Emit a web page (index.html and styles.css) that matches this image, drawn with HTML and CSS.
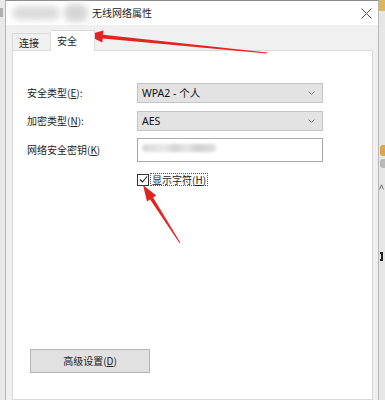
FILE: index.html
```html
<!DOCTYPE html>
<html lang="zh-CN">
<head>
<meta charset="utf-8">
<title>无线网络属性</title>
<link rel="stylesheet" href="styles.css">
</head>
<body>
<div class="screen">
  <div class="bg-left"><div class="bg-mark"></div></div>
  <div class="window">
    <div class="titlebar">
      <div class="blur-a"></div>
      <div class="blur-b"></div>
      <span class="title">无线网络属性</span>
      <svg class="close" width="11" height="11" viewBox="0 0 11 11"><path d="M0.5 0.5 L10.5 10.5 M10.5 0.5 L0.5 10.5" stroke="#505050" stroke-width="1" fill="none"/></svg>
    </div>
    <div class="body">
      <div class="tabs">
        <div class="tab">连接</div>
        <div class="tab active">安全</div>
      </div>
      <div class="panel">
        <div class="row">
          <span class="label">安全类型(<u>E</u>):</span>
          <div class="select"><span>WPA2 - 个人</span><svg width="7" height="4" viewBox="0 0 7 4"><path d="M0.5 0.5 L3.5 3.5 L6.5 0.5" stroke="#8a8a8a" fill="none"/></svg></div>
        </div>
        <div class="row">
          <span class="label">加密类型(<u>N</u>):</span>
          <div class="select"><span>AES</span><svg width="7" height="4" viewBox="0 0 7 4"><path d="M0.5 0.5 L3.5 3.5 L6.5 0.5" stroke="#8a8a8a" fill="none"/></svg></div>
        </div>
        <div class="row row-key">
          <span class="label">网络安全密钥(<u>K</u>)</span>
          <div class="input"><div class="blur-key"></div></div>
        </div>
        <div class="check-row">
          <span class="checkbox"><svg width="9" height="9" viewBox="0 0 9 9"><path d="M1 4.5 L3.5 7 L8 1.5" stroke="#222" stroke-width="1.1" fill="none"/></svg></span>
          <span class="check-label">显示字符(<u>H</u>)</span>
        </div>
        <div class="btn">高级设置(<u>D</u>)</div>
      </div>
    </div>
  </div>
  <div class="bg-right">
    <div class="r-yellow"></div>
    <div class="r-orange"></div>
    <div class="r-gray"></div>
    <svg class="r-caret" width="5" height="6" viewBox="0 0 5 6"><path d="M0.5 5.5 L2.5 0.8 L4.5 5.5" stroke="#777" fill="none"/></svg>
    <div class="r-bracket"></div>
  </div>
  <svg class="arrows" width="385" height="400" viewBox="0 0 385 400">
    <polygon fill="#e3231f" points="87,35 103.5,30.6 103.1,34.8 267,52.5 267,53.5 102.7,38.4 102.3,42.6"/>
    <polygon fill="#e3231f" points="143,185 156.2,195.5 153.1,197.5 180.4,242.7 179.6,243.3 150.1,199.5 147,201.5"/>
  </svg>
</div>
</body>
</html>
```

FILE: styles.css
```css
* { box-sizing: border-box; }
html, body { margin: 0; padding: 0; }
body {
  font-family: "Noto Sans", "Noto Sans CJK SC", sans-serif;
  color: #1a1a1a;
  background: #ececec;
}
.screen {
  position: relative;
  width: 385px;
  height: 400px;
  overflow: hidden;
  display: flex;
}
.bg-left {
  width: 5px;
  flex: none;
  background: #e9e9e9;
  overflow: hidden;
}
.bg-mark {
  margin-top: 8px;
  width: 3px;
  height: 9px;
  background: #8a8a8a;
  opacity: 0.6;
}
.window {
  width: 374px;
  flex: none;
  border-left: 1px solid #b8b8b8;
  border-right: 1px solid #b8b8b8;
  border-top: 1px solid #8c8c8c;
  background: #f0f0f0;
  display: flex;
  flex-direction: column;
}
.titlebar {
  height: 24px;
  background: #fff;
  display: flex;
  align-items: center;
  position: relative;
  flex: none;
}
.blur-a {
  position: absolute;
  left: 6px; top: 5px;
  width: 48px; height: 14px;
  background: #dcdcdc;
  border-radius: 7px;
  filter: blur(3px);
}
.blur-b {
  position: absolute;
  left: 58px; top: 3px;
  width: 24px; height: 18px;
  background: #d6d6d6;
  border-radius: 8px;
  filter: blur(3px);
}
.title {
  margin-left: 86px;
  font-family: "Noto Sans CJK SC", sans-serif;
  font-size: 10px;
  line-height: 12px;
  color: #222;
}
.close {
  margin-left: auto;
  margin-right: 6px;
}
.body {
  flex: 1;
  padding: 0 5px 0 6px;
  display: flex;
  flex-direction: column;
}
.tabs {
  height: 25px;
  display: flex;
  align-items: flex-end;
  flex: none;
}
.tab {
  font-family: "Noto Sans CJK SC", sans-serif;
  font-size: 10px;
  line-height: 12px;
  color: #1e1e1e;
  height: 17px;
  width: 39px;
  padding: 3px 0 0 6px;
  border: 1px solid #d9d9d9;
  border-bottom: none;
  background: #f0f0f0;
}
.tab.active {
  height: 21px;
  width: 44px;
  padding: 4px 0 0 6px;
  background: #fff;
  border-left: none;
  position: relative;
  z-index: 1;
  margin-bottom: -1px;
}
.panel {
  flex: 1;
  background: #fff;
  border: 1px solid #d9d9d9;
  padding: 32px 0 0 14px;
  font-family: "Noto Sans CJK SC", sans-serif;
  font-size: 10px;
}
.row {
  display: flex;
  align-items: center;
  height: 20px;
  margin-bottom: 8px;
}
.row-key {
  height: 24px;
  margin-bottom: 11px;
  margin-top: -1px;
}
.label {
  width: 110px;
  flex: none;
  line-height: 12px;
  color: #222;
}
.select {
  width: 186px;
  height: 20px;
  background: #e3e3e3;
  border: 1px solid #c4c4c4;
  display: flex;
  align-items: center;
  justify-content: space-between;
  padding: 0 7px 0 4px;
  font-family: "Noto Sans", "Noto Sans CJK SC", sans-serif;
  font-size: 10.5px;
  line-height: 12px;
  color: #111;
}
.input {
  width: 186px;
  height: 24px;
  background: #fff;
  border: 1px solid #a9a9a9;
  position: relative;
}
.blur-key {
  position: absolute;
  left: 4px; top: 5px;
  width: 74px; height: 8px;
  border-radius: 4px;
  background: linear-gradient(90deg, #d8d8d8 0%, #e8e8e8 30%, #d2d2d2 45%, #e6e6e6 60%, #d0d0d0 75%, #dedede 100%);
  filter: blur(1.5px);
}
.check-row {
  display: flex;
  align-items: center;
  margin-left: 110px;
  height: 13px;
}
.checkbox {
  width: 12px;
  height: 12px;
  border: 1px solid #333;
  display: flex;
  align-items: center;
  justify-content: center;
  background: #fff;
}
.check-label {
  margin-left: 1px;
  border: 1px dotted #555;
  padding: 0 1px;
  line-height: 11px;
  color: #1a1a1a;
}
.btn {
  margin-top: 163px;
  margin-left: 3px;
  width: 120px;
  height: 24px;
  background: #e1e1e1;
  border: 1px solid #b4b4b4;
  display: flex;
  align-items: center;
  justify-content: center;
  line-height: 12px;
  color: #222;
}
.bg-right {
  width: 6px;
  flex: none;
  background: #e6e6e6;
  display: flex;
  flex-direction: column;
  align-items: flex-start;
}
.r-yellow {
  width: 6px; height: 11px;
  background: #dfb658;
}
.r-orange {
  margin-top: 134px;
  margin-left: 1px;
  width: 5px; height: 11px;
  background: #d9a64a;
  border-radius: 3px 0 0 3px;
}
.r-gray {
  margin-top: 3px;
  margin-left: 1px;
  width: 5px; height: 9px;
  background: #b9b9b9;
  border-radius: 3px 0 0 3px;
}
.r-caret {
  margin-top: 16px;
  margin-left: 0;
}
.r-bracket {
  margin-top: 62px;
  margin-left: 1px;
  width: 3px;
  height: 9px;
  border: 2px solid #222;
  border-left: none;
}
.arrows {
  position: absolute;
  left: 0; top: 0;
  pointer-events: none;
}
```
